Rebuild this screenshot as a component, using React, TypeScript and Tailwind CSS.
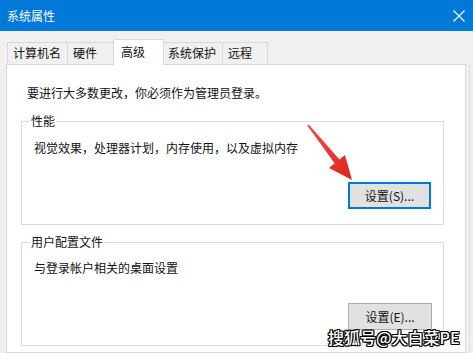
import React from 'react';

const tabs = [
  { label: '计算机名', cls: 'w-[60px] h-[22px] mb-px border-l border-t pl-[5px] pt-[2px] bg-[#f0f0f0]' },
  { label: '硬件', cls: 'w-[46px] h-[22px] mb-px border-l border-t pl-[5px] pt-[2px] bg-[#f0f0f0]' },
  { label: '高级', cls: 'w-[51px] h-[26px] border-l border-t border-r pl-[7px] pt-[4px] bg-white' },
  { label: '系统保护', cls: 'w-[58px] h-[22px] mb-px border-t pl-[4px] pt-[2px] bg-[#f0f0f0]' },
  { label: '远程', cls: 'w-[46px] h-[22px] mb-px border-l border-t border-r pl-[5px] pt-[2px] bg-[#f0f0f0]' },
];

export default function App() {
  return (
    <div className="relative w-[473px] h-[353px] overflow-hidden bg-[#f0f0f0] flex flex-col font-['Noto_Sans_CJK_SC','Noto_Sans',sans-serif] text-[12px] text-[#111]">
      {/* 标题栏 */}
      <div className="h-[31px] shrink-0 bg-[#0078d7] text-white flex items-center justify-between pl-[7px] pr-[7px]">
        <span className="leading-[16px]">系统属性</span>
        <svg width="12" height="12" viewBox="0 0 12 12" className="mr-[1px]">
          <path d="M0.5 0.5 L11.5 11.5 M11.5 0.5 L0.5 11.5" stroke="#fff" strokeWidth="1.1" />
        </svg>
      </div>

      <div className="flex-1 flex flex-col pt-[8px] pl-[6px] pr-[3px]">
        {/* 选项卡 */}
        <div className="relative z-10 -mb-px flex items-end pl-px leading-[16px]">
          {tabs.map((t) => (
            <div key={t.label} className={`border-[#d9d9d9] ${t.cls}`}>
              {t.label}
            </div>
          ))}
        </div>

        <div className="flex-1 flex">
          {/* 面板 */}
          <div className="flex-1 bg-white border border-[#d9d9d9] pt-[20px] flex flex-col">
            <div className="pl-[20px] leading-[16px]">要进行大多数更改，你必须作为管理员登录。</div>

            <fieldset className="mt-[12px] ml-[14px] mr-[21px] border border-[#dcdcdc]">
              <legend className="ml-[8px] px-px leading-[16px]">性能</legend>
              <div className="pt-[11px] pl-[12px] leading-[16px]">视觉效果，处理器计划，内存使用，以及虚拟内存</div>
              <div className="flex justify-end pr-[12px] mt-[26px] pb-[15px]">
                <button className="w-[83px] h-[27px] border-2 border-[#0078d7] bg-[#e1e1e1] leading-[16px]">
                  设置(S)...
                </button>
              </div>
            </fieldset>

            <fieldset className="mt-[9px] ml-[14px] mr-[21px] border border-[#dcdcdc]">
              <legend className="ml-[8px] px-px leading-[16px]">用户配置文件</legend>
              <div className="pt-[10px] pl-[12px] leading-[16px]">与登录帐户相关的桌面设置</div>
              <div className="flex justify-end pr-[11px] mt-[27px] pb-[15px]">
                <button className="w-[84px] h-[27px] border border-[#adadad] bg-[#e1e1e1] leading-[16px]">
                  设置(E)...
                </button>
              </div>
            </fieldset>
          </div>
          <div className="w-[4px] mt-[1px] border-r border-[#e2e2e2]" />
        </div>
      </div>

      {/* 红色箭头标注 */}
      <svg className="absolute left-0 top-0 pointer-events-none" width="473" height="353">
        <defs>
          <linearGradient id="arr" x1="0" y1="0" x2="1" y2="1">
            <stop offset="0" stopColor="#f0504a" />
            <stop offset="1" stopColor="#e0231e" />
          </linearGradient>
        </defs>
        <polygon
          points="307.2,125.6 334.6,163.2 329,168 352,180 345,155 339.4,159.6 308.8,124.4"
          fill="url(#arr)"
        />
      </svg>

      {/* 水印 */}
      <div className="absolute left-[328px] top-[328px] text-[16px] leading-[18px] font-medium text-white [text-shadow:1px_0_#000,-1px_0_#000,0_1px_#000,0_-1px_#000,1px_1px_#000,-1px_-1px_#000,1px_-1px_#000,-1px_1px_#000]">
        搜狐号@大白菜PE
      </div>
    </div>
  );
}
